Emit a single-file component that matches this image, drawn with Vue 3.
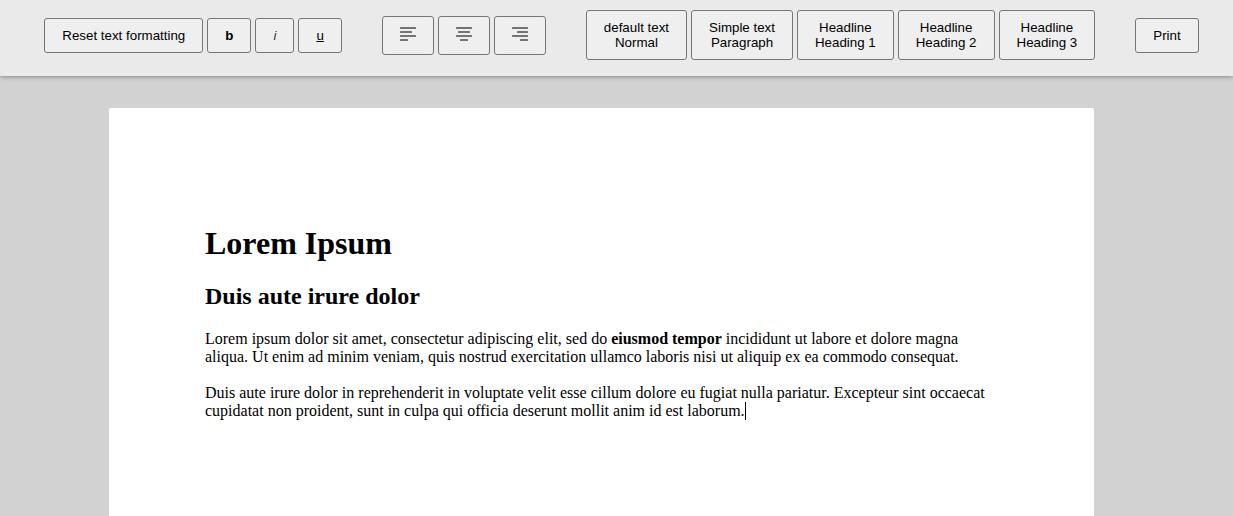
<script setup>
const marks = [
  { label: 'Reset text formatting', cls: '' },
  { label: 'b', cls: 'bold', title: 'Bold' },
  { label: 'i', cls: 'italic', title: 'Italic' },
  { label: 'u', cls: 'underline', title: 'Underline' },
]
const aligns = [
  { title: 'Align left', lines: [[0, 16], [0, 12], [0, 16], [0, 8]] },
  { title: 'Align center', lines: [[0, 16], [2, 12], [0, 16], [4, 8]] },
  { title: 'Align right', lines: [[0, 16], [5, 11], [0, 16], [8, 8]] },
]
const blocks = [
  ['default text', 'Normal'],
  ['Simple text', 'Paragraph'],
  ['Headline', 'Heading 1'],
  ['Headline', 'Heading 2'],
  ['Headline', 'Heading 3'],
]
const print = () => window.print()
</script>

<template>
  <div class="app">
    <header class="toolbar">
      <div class="group">
        <button v-for="m in marks" :key="m.label" type="button" :class="m.cls" :title="m.title">{{ m.label }}</button>
      </div>
      <div class="group">
        <button v-for="a in aligns" :key="a.title" type="button" :aria-label="a.title">
          <svg class="icon" width="16" height="16" viewBox="0 0 16 16" aria-hidden="true">
            <rect v-for="(l, n) in a.lines" :key="n" :x="l[0]" :y="1 + n * 4" :width="l[1]" height="2" rx="0.5" />
          </svg>
        </button>
      </div>
      <div class="group">
        <button v-for="b in blocks" :key="b[1]" type="button">{{ b[0] }}<br />{{ b[1] }}</button>
      </div>
      <div class="group">
        <button type="button" @click="print">Print</button>
      </div>
    </header>
    <main class="desk">
      <article class="sheet" contenteditable="true" spellcheck="false">
        <h1>Lorem Ipsum</h1>
        <h2>Duis aute irure dolor</h2>
        <p>Lorem ipsum dolor sit amet, consectetur adipiscing elit, sed do <b>eiusmod tempor</b> incididunt ut labore et dolore magna aliqua. Ut enim ad minim veniam, quis nostrud exercitation ullamco laboris nisi ut aliquip ex ea commodo consequat.</p>
        <p>Duis aute irure dolor in reprehenderit in voluptate velit esse cillum dolore eu fugiat nulla pariatur. Excepteur sint occaecat cupidatat non proident, sunt in culpa qui officia deserunt mollit anim id est laborum.<span class="caret"></span></p>
      </article>
    </main>
  </div>
</template>

<style>
body {
  margin: 0;
  background: #d2d2d2;
}
</style>

<style scoped>
.app {
  height: 100vh;
  display: flex;
  flex-direction: column;
  overflow: hidden;
}
.toolbar {
  position: relative;
  flex: none;
  display: flex;
  justify-content: center;
  align-items: center;
  gap: 40px;
  padding: 10px 0 16px 10px;
  background: #eaeaea;
  box-shadow: 0 0 5px rgba(0, 0, 0, 0.5);
}
.group {
  display: flex;
  align-items: center;
  gap: 4px;
}
button {
  box-sizing: border-box;
  margin: 0;
  padding: 9px 17px;
  border: 1px solid #767676;
  border-radius: 3px;
  background: #efefef;
  color: #000;
  font-family: "Liberation Sans", Arial, sans-serif;
  line-height: 15px;
  text-align: center;
  white-space: nowrap;
}
.bold {
  font-weight: bold;
}
.italic {
  font-style: italic;
  color: #333;
}
.underline {
  text-decoration: underline;
}
.icon {
  display: block;
  margin-bottom: 3px;
  fill: #747474;
}
.desk {
  flex: 1;
  display: flex;
  justify-content: center;
  padding: 32px 30px 0 0;
}
.sheet {
  box-sizing: border-box;
  width: 100%;
  max-width: 985px;
  min-height: 1200px;
  padding: 96px;
  border-radius: 2px;
  background: #fff;
  color: #000;
  font: 16px/18px "Liberation Serif", "Times New Roman", serif;
  outline: none;
}
h1 {
  margin: 21px 0;
  font-size: 32px;
  line-height: 37px;
}
h2 {
  margin: 20px 0;
  font-size: 24px;
  line-height: 27px;
}
p {
  margin: 0 0 18px;
}
.caret {
  display: inline-block;
  width: 1px;
  height: 18px;
  background: #000;
  vertical-align: bottom;
}
</style>
